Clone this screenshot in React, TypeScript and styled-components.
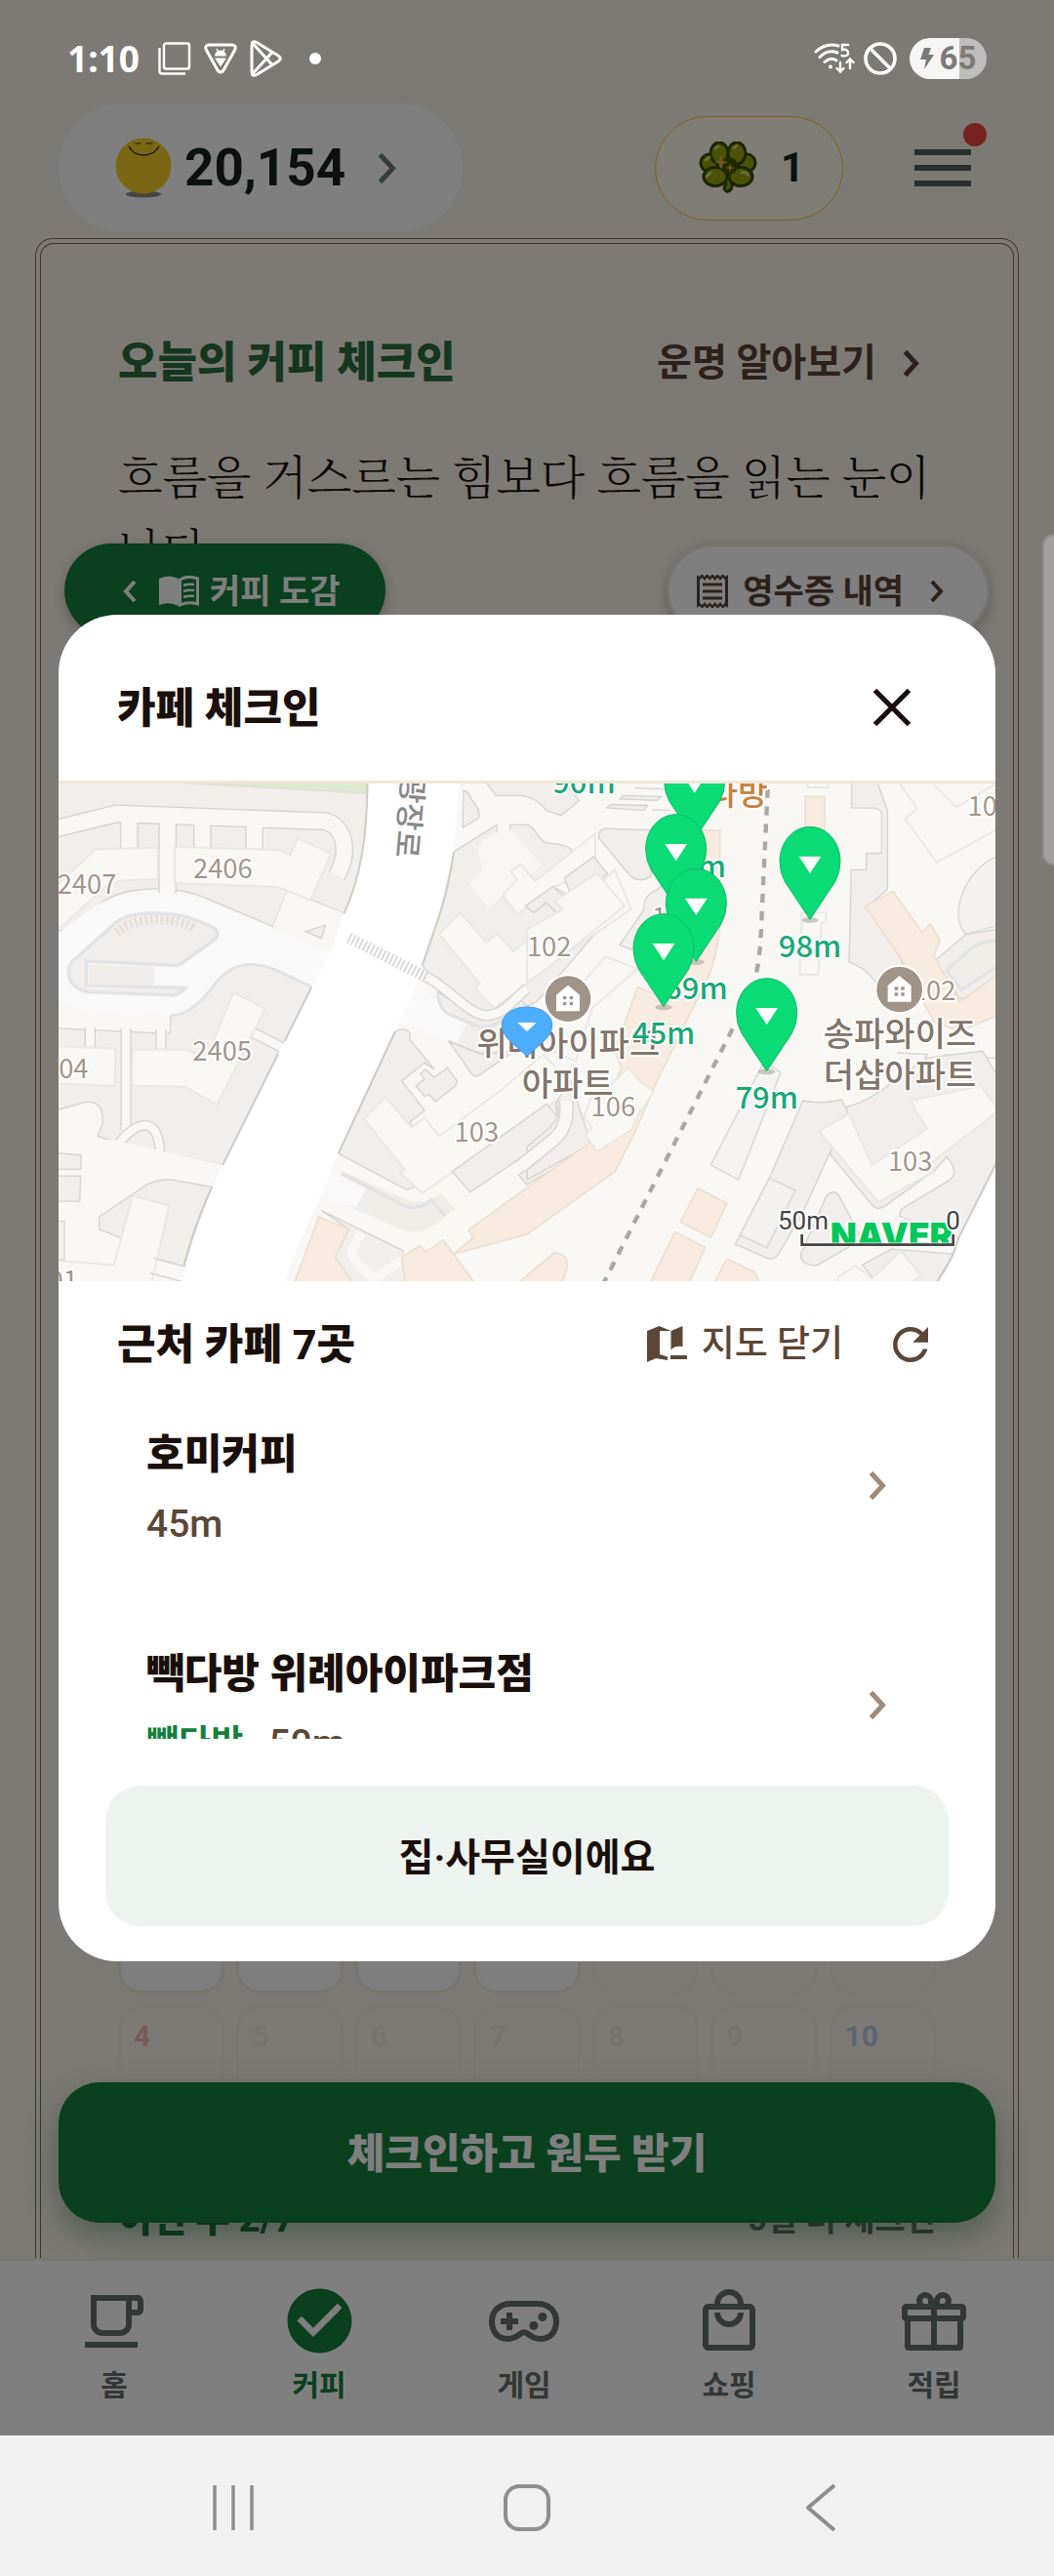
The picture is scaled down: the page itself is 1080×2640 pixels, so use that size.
import React from 'react';
import styled, { createGlobalStyle, css } from 'styled-components';
import {
  MdCheckCircle,
  MdOutlineLocalCafe,
  MdOutlineLocalMall,
  MdRefresh,
} from 'react-icons/md';

const GlobalStyle = createGlobalStyle`
  *, *::before, *::after { box-sizing: border-box; }
  body {
    margin: 0;
    font-family: Roboto, "Noto Sans CJK KR", sans-serif;
    color: #1a0f0a;
  }
  button {
    font: inherit;
    color: inherit;
    border: 0;
    background: none;
    padding: 0;
    cursor: pointer;
  }
  h1, h2, h3, p, ul { margin: 0; padding: 0; font-weight: inherit; }
  ul { list-style: none; }
  svg { display: block; flex: none; }
`;

const green = '#15803d';
const brown = '#5c4636';

const Screen = styled.div`
  position: relative;
  display: flex;
  flex-direction: column;
  height: 100vh;
  overflow: hidden;
  background: #faf5ea;
`;

/* ---------- status bar ---------- */

const StatusBar = styled.div`
  position: relative;
  z-index: 3;
  display: flex;
  align-items: center;
  justify-content: space-between;
  height: 106px;
  padding: 14px 69px 0;
  color: #fff;
`;

const StatusGroup = styled.div<{ $gap: number }>`
  display: flex;
  align-items: center;
  gap: ${p => p.$gap}px;
`;

const Clock = styled.span`
  font: 700 37px/48px "Noto Sans", sans-serif;
  margin-right: 6px;
`;

const StatusDot = styled.span`
  width: 12px;
  height: 12px;
  margin-left: 14px;
  border-radius: 50%;
  background: #fff;
`;

const Battery = styled.span`
  display: flex;
  align-items: center;
  justify-content: center;
  gap: 6px;
  width: 79px;
  height: 42px;
  margin-left: 4px;
  border-radius: 21px;
  background: linear-gradient(90deg, #f5f5f3 65%, #bebdbb 65%);
  color: #7d7a75;
  font: 700 33px/42px Roboto, sans-serif;
`;

/* ---------- header ---------- */

const Header = styled.header`
  display: flex;
  align-items: center;
  height: 132px;
  padding: 0 74px 0 60px;
`;

const PointsPill = styled.button`
  display: flex;
  align-items: center;
  height: 132px;
  padding: 0 68px 0 57px;
  margin-right: auto;
  border-radius: 66px;
  background: #fff;
  color: #14231f;
  font-size: 53px;
  font-weight: 700;
  line-height: 64px;
  span { margin: 0 33px 0 12px; }
`;

const CloverPill = styled.button`
  display: flex;
  align-items: center;
  gap: 24px;
  height: 107px;
  padding: 0 39px 0 44px;
  border: 1px solid #f8bf3a;
  border-radius: 54px;
  background: #fffaeb;
  color: #14231f;
  font-size: 42px;
  font-weight: 700;
  line-height: 54px;
`;

const MenuButton = styled.button`
  position: relative;
  display: grid;
  gap: 10px;
  width: 80px;
  padding: 8px 11px;
  margin-left: 62px;
  i { height: 6px; background: #4e6058; }
`;

const Alert = styled.b`
  position: absolute;
  top: -19px;
  right: -5px;
  width: 24px;
  height: 24px;
  border-radius: 50%;
  background: #ef4444;
`;

/* ---------- page ---------- */

const Page = styled.main`
  position: relative;
  flex: 1;
  min-height: 0;
  display: flex;
  padding: 6px 36px 0;
  overflow: hidden;
`;

const Frame = styled.div`
  flex: 1;
  display: flex;
  padding: 4px 4px 0;
  border: 1px solid #806656;
  border-bottom: 0;
  border-radius: 18px 18px 0 0;
`;

const FrameInner = styled.div`
  flex: 1;
  display: flex;
  flex-direction: column;
  padding: 92px 79px 10px;
  border: 1px solid #806656;
  border-bottom: 0;
  border-radius: 14px 14px 0 0;
`;

const Row = styled.div`
  display: flex;
  align-items: center;
  justify-content: space-between;
`;

const SectionTitle = styled.h2`
  color: #2a6e3e;
  font-size: 44px;
  font-weight: 800;
  line-height: 60px;
`;

const FortuneLink = styled.button`
  display: flex;
  align-items: center;
  gap: 27px;
  padding-right: 17px;
  color: #5c4336;
  font-size: 39px;
  font-weight: 700;
  line-height: 60px;
`;

const Fortune = styled.p`
  margin-top: 46px;
  color: #1c130c;
  font: 300 47px/75px "Noto Serif CJK KR", "Noto Sans CJK KR", serif;
  word-break: keep-all;
`;

const Calendar = styled.div`
  display: grid;
  grid-template-columns: repeat(7, 1fr);
  grid-auto-rows: 144px;
  gap: 12px;
  margin-top: auto;
`;

const Day = styled.div<{ $color?: string; $filled?: boolean }>`
  padding: 14px 13px;
  border: 3px solid ${p => (p.$filled ? '#efeadc' : '#f6f1e6')};
  border-radius: 24px;
  background: ${p => (p.$filled ? '#fefdfd' : 'transparent')};
  color: ${p => p.$color || '#ebe6dd'};
  font-size: 30px;
  font-weight: 700;
  line-height: 30px;
`;

const Progress = styled(Row)`
  margin-top: 45px;
  line-height: 60px;
  font-weight: 700;
`;

const Week = styled.span`
  color: #15703a;
  font-size: 38px;
  font-weight: 800;
`;

const Remaining = styled.span`
  color: #5f6f66;
  font-size: 34px;
`;

const FloatBar = styled.div`
  position: absolute;
  top: 319px;
  left: 66px;
  right: 66px;
  display: flex;
  justify-content: space-between;
  height: 90px;
  border-bottom: 1px solid #e8e2d8;
`;

const FloatPill = styled.button<{ $primary?: boolean }>`
  display: flex;
  align-items: center;
  height: 96px;
  border-radius: 48px;
  font-size: 34px;
  font-weight: 700;
  line-height: 48px;
  box-shadow: 0 4px 14px rgba(40, 30, 20, 0.3);
  ${p =>
    p.$primary
      ? css`
          gap: 11px;
          padding: 2px 46px 0 60px;
          background: ${green};
          color: #fff;
          svg:first-child { margin-right: 12px; }
        `
      : css`
          gap: 15px;
          padding: 2px 44px 0 28px;
          border: 3px solid #f1e5da;
          background: #fff;
          color: #5c4336;
          svg:last-child { margin-left: 12px; }
        `}
`;

const CheckInButton = styled.button`
  position: absolute;
  left: 60px;
  right: 60px;
  bottom: 36px;
  height: 144px;
  padding-top: 4px;
  border-radius: 42px;
  background: ${green};
  color: #fff;
  font-size: 42px;
  font-weight: 800;
  line-height: 60px;
  box-shadow: 0 14px 36px rgba(21, 90, 50, 0.4);
`;

/* ---------- tab bar ---------- */

const TabBar = styled.nav`
  display: grid;
  grid-template-columns: repeat(5, 1fr);
  height: 182px;
  padding: 18px 18px 0 12px;
  border-top: 3px solid #edf0e8;
  background: #fff;
`;

const Tab = styled.button<{ $active?: boolean }>`
  display: flex;
  flex-direction: column;
  align-items: center;
  justify-content: flex-start;
  gap: 2px;
  color: ${p => (p.$active ? green : '#64716a')};
  font-size: 30px;
  font-weight: 700;
  line-height: 42px;
  span { display: grid; place-items: center; height: 87px; }
`;

/* ---------- system navigation ---------- */

const SystemNav = styled.div`
  position: relative;
  z-index: 3;
  display: grid;
  grid-template-columns: repeat(3, 1fr);
  height: 144px;
  padding: 4px 88px 0;
  background: #f1f1f1;
  color: #8e8e8e;
  button { display: grid; place-items: center; }
`;

const EdgeHandle = styled.div`
  position: absolute;
  z-index: 3;
  top: 547px;
  right: 0;
  width: 12px;
  height: 340px;
  border: 2px solid #8f8e8b;
  border-right: 0;
  border-radius: 12px 0 0 12px;
  background: #a1a09e;
`;

/* ---------- dialog ---------- */

const Scrim = styled.div`
  position: absolute;
  z-index: 2;
  inset: 0;
  display: grid;
  align-items: center;
  padding: 0 60px;
  background: rgba(0, 0, 0, 0.5);
`;

const Dialog = styled.section`
  display: flex;
  flex-direction: column;
  border-radius: 60px;
  background: #fff;
  overflow: hidden;
`;

const DialogHeader = styled(Row)`
  height: 173px;
  padding: 19px 73px 0 60px;
  border-bottom: 3px solid #efe6da;
`;

const DialogTitle = styled.h1`
  padding-top: 2px;
  font-size: 43px;
  font-weight: 800;
  line-height: 60px;
`;

const CloseButton = styled.button`
  display: grid;
  place-items: center;
  width: 66px;
  height: 66px;
`;

const MapSvg = styled.svg`
  width: 100%;
  height: 510px;
  text { font-family: "Noto Sans CJK KR", sans-serif; }
`;

const ListHeader = styled(Row)`
  height: 127px;
  padding: 2px 60px 0;
`;

const ListTitle = styled.h2`
  font-size: 43px;
  font-weight: 800;
  line-height: 60px;
`;

const Tools = styled.div`
  display: flex;
  align-items: center;
  gap: 42px;
  color: ${brown};
`;

const MapToggle = styled.button`
  display: flex;
  align-items: center;
  gap: 15px;
  font-size: 37px;
  font-weight: 500;
  line-height: 60px;
`;

const CafeList = styled.ul`
  display: flex;
  flex-direction: column;
  gap: 61px;
  height: 342px;
  overflow: hidden;
`;

const CafeButton = styled.button`
  display: flex;
  align-items: center;
  justify-content: space-between;
  width: 100%;
  padding: 12px 112px 12px 90px;
  text-align: left;
`;

const CafeText = styled.span`
  display: grid;
  gap: 11px;
  padding-top: 9px;
  line-height: 60px;
`;

const CafeName = styled.span`
  font-size: 42px;
  font-weight: 800;
`;

const CafeMeta = styled.span`
  display: flex;
  gap: 26px;
  color: ${brown};
  font-size: 39px;
  font-weight: 500;
`;

const Brand = styled.span`
  color: ${green};
  font-size: 36px;
  font-weight: 700;
`;

const HomeButton = styled.button`
  height: 144px;
  padding-top: 3px;
  margin: 48px 48px 36px;
  border-radius: 36px;
  background: #edf4f0;
  font-size: 39px;
  font-weight: 700;
  line-height: 60px;
`;

/* ---------- icons ---------- */

function Chevron({ height, color = 'currentColor', left = false, weight = 5 }: {
  height: number; color?: string; left?: boolean; weight?: number;
}) {
  const w = height / 2;
  const pad = weight / 2;
  const d = left
    ? `M${w + pad} ${pad}L${pad + 1} ${w + pad}L${w + pad} ${height + pad}`
    : `M${pad} ${pad}L${w + pad - 1} ${w + pad}L${pad} ${height + pad}`;
  return (
    <svg width={w + weight} height={height + weight} fill="none" stroke={color} strokeWidth={weight} aria-hidden>
      <path d={d} />
    </svg>
  );
}

const WindowsIcon = () => (
  <svg width="34" height="34" viewBox="0 0 34 34" fill="none" stroke="#fff" strokeWidth="2.4">
    <rect x="6" y="1.5" width="26" height="26" rx="2" />
    <path d="M1.5 6v24q0 2.500 2.500 2.500h24" />
  </svg>
);

const DebugIcon = () => (
  <svg width="34" height="32" viewBox="0 0 34 32" fill="none">
    <path d="M4.500 2h25q4 1 2.200 5L20 28q-3 4-6 0L2.300 7Q.5 3 4.500 2Z" stroke="#fff" strokeWidth="3" />
    <path d="M11 13.500a6 6 0 0 1 12 0ZM11 15.500h12l-6 9Z" fill="#fff" />
    <path d="M13 6l1.500 3M21 6l-1.500 3" stroke="#fff" strokeWidth="1.400" />
  </svg>
);

const PlayIcon = () => (
  <svg width="34" height="38" viewBox="0 0 34 38" fill="none" stroke="#fff" strokeWidth="3" strokeLinejoin="round">
    <path d="M2 5q0-5 5-2.500L29 16q4.500 3 0 6L7 35.500Q2 38 2 33Z" />
    <path d="M3 3.500L23 25.500M3 34.500L23 12.500" />
  </svg>
);

const WifiIcon = () => (
  <svg width="42" height="32" viewBox="0 0 42 32" fill="none" stroke="#fff" strokeWidth="3" strokeLinecap="round">
    <path d="M2 9Q12-.5 25 3M6 14.500Q14 6 24 10M11 19.500Q17 14 23 18" />
    <circle cx="17" cy="24.500" r="1" fill="#fff" strokeWidth="2" />
    <path d="M27 20v9M23.500 26l3.500 3.500 3.500-3.500M37 26v-9M33.500 20l3.500-3.500 3.500 3.500" strokeWidth="2.400" />
    <path d="M35 2h-6v5q6-1 6 3.200T28.500 13" strokeWidth="2.400" />
  </svg>
);

const BlockIcon = () => (
  <svg width="34" height="34" viewBox="0 0 34 34" fill="none" stroke="#fff" strokeWidth="3.600">
    <circle cx="17" cy="17" r="15" />
    <path d="M6.500 6.500l21 21" />
  </svg>
);

const BoltIcon = () => (
  <svg width="14" height="22" viewBox="0 0 14 22" fill="currentColor">
    <path d="M4 0h7L8.500 7H14L4 22l2-10H0Z" />
  </svg>
);

const CoinIcon = () => (
  <svg width="60" height="64" viewBox="0 0 60 64" fill="none">
    <ellipse cx="30" cy="59" rx="18" ry="3.500" fill="#8c8c8c" />
    <circle cx="30" cy="30" r="28.500" fill="#f4cc28" />
    <path d="M15 10Q20 19 30 19Q41 19 46 10" stroke="#33290a" strokeWidth="1.400" />
    <path d="M21.500 7h6M32.500 7h7" stroke="#33290a" strokeWidth="1.200" />
  </svg>
);

const CloverIcon = () => (
  <svg width="60" height="54" viewBox="0 0 60 54">
    <g fill="#97a50e" stroke="#364a04" strokeWidth="3">
      <path d="M25 34Q30 42 26 48Q29 54 33 49Q36 44 30 34Z" />
      <ellipse cx="11" cy="22" rx="9" ry="9" />
      <ellipse cx="49" cy="22" rx="9" ry="9" />
      <ellipse cx="21" cy="12" rx="9" ry="11" />
      <ellipse cx="39" cy="12" rx="9" ry="11" />
      <ellipse cx="17" cy="36" rx="12" ry="9.500" />
      <ellipse cx="43" cy="36" rx="12" ry="9.500" />
    </g>
    <circle cx="31" cy="25" r="9" fill="#435706" />
    <path d="M7 19l4-3M17 7l3-2M36 7l3-3M8 36l4-4M44 32q5-1 6 2" stroke="#d4dc7a" strokeWidth="2.500" strokeLinecap="round" fill="none" />
    <path d="M23 14l2 6 5 1-5 2-2 6-2-6-5-2 5-1ZM32 22l1 4 4 1-4 1-1 4-1-4-4-1 4-1Z" fill="#e2ab2c" />
  </svg>
);

const BookIcon = () => (
  <svg width="41" height="32" viewBox="0 0 41 32">
    <path d="M0 3Q10-2 20 3V31Q10 26 0 30Z" fill="currentColor" />
    <path d="M21.500 4Q30-1 39.500 3V29Q30 26 21.500 30Z" fill="none" stroke="currentColor" strokeWidth="3" />
    <path d="M25 10q5-2 11-1M25 16q5-2 11-1M25 22q5-2 11-1" fill="none" stroke="currentColor" strokeWidth="2.500" />
  </svg>
);

const ReceiptIcon = () => (
  <svg width="32" height="34" viewBox="0 0 32 34" fill="none" stroke="currentColor" strokeWidth="3">
    <path d="M1.500 2V32M30.500 2V32M6 10h20M6 17h20M6 24h20" />
    <path d="M0 1l2.600 3 2.700-3L8 4l2.600-3 2.700 3L16 1l2.600 3 2.700-3L24 4l2.600-3 2.700 3L32 1M0 33l2.600-3 2.700 3L8 30l2.600 3 2.700-3L16 33l2.600-3 2.700 3L24 30l2.600 3 2.700-3L32 33" strokeWidth="2.500" />
  </svg>
);

const MapIcon = () => (
  <svg width="41" height="37" viewBox="0 0 41 37" fill="currentColor">
    <path d="M0 5L12.500 0L24.500 5L36.500 0V21Q27 20 24.500 25V5L13 5V29L21 31.500V35L9 33L0 37Z" />
    <path d="M24 30h17v4H24Z" />
  </svg>
);

const CloseIcon = () => (
  <svg width="40" height="40" viewBox="0 0 40 40" stroke="currentColor" strokeWidth="5.200">
    <path d="M2.500 2.500l35 35M37.500 2.500l-35 35" />
  </svg>
);

const GamepadIcon = () => (
  <svg width="72" height="72" viewBox="0 0 24 24" fill="none" stroke="currentColor" strokeWidth="2">
    <path d="M7.500 6H16.500C20.500 6 23 8.500 23 12S21 18 17.500 18C15.500 18 14.500 17.200 13.300 16.300Q12 15.200 10.700 16.300C9.500 17.200 8.500 18 6.500 18C3 18 1 15.500 1 12S3.500 6 7.500 6Z" />
    <path d="M7 9v6M4 12h6" />
    <g fill="currentColor" stroke="none">
      <circle cx="18.300" cy="10.500" r="1.500" />
      <circle cx="15.300" cy="13.500" r="1.500" />
    </g>
  </svg>
);

const GiftIcon = () => (
  <svg width="72" height="72" viewBox="0 0 24 24" fill="none" stroke="currentColor" strokeWidth="2">
    <rect x="2" y="7" width="20" height="4" rx=".5" />
    <path d="M3 11v9.500q0 .5.5.5h17q.5 0 .5-.5V11M12 6v15" />
    <path d="M9 7a2 2 0 1 1 2-2v2ZM15 7a2 2 0 1 0-2-2v2Z" />
  </svg>
);

/* ---------- map drawing ---------- */

const Halo = styled.text<{ $fill: string; $weight?: number }>`
  fill: ${p => p.$fill};
  font-weight: ${p => p.$weight || 400};
  stroke: #fff;
  stroke-width: 12px;
  stroke-linejoin: round;
  paint-order: stroke;
`;

const LotLabel = ({ x, y, children }: { x: number; y: number; children: React.ReactNode }) => (
  <Halo x={x} y={y} $fill="#a3958b" fontSize="82" textAnchor="middle">{children}</Halo>
);

const PlaceLabel = ({ x, y, children }: { x: number; y: number; children: React.ReactNode }) => (
  <Halo x={x} y={y} $fill="#84756a" $weight={500} fontSize="102" textAnchor="middle">{children}</Halo>
);

const CafePin = ({ x, y, label }: { x: number; y: number; label: string }) => (
  <g transform={`translate(${x} ${y})`}>
    <ellipse cx="0" cy="2" rx="26" ry="9" fill="#000" opacity=".18" />
    <Halo x={0} y={116} $fill="#1aa877" $weight={500} fontSize="93" textAnchor="middle">{label}</Halo>
    <path d="M0 0L-76-114Q-93-144-93-178C-93-240-50-285 0-285C50-285 93-240 93-178Q93-144 76-114Z" fill="#0adb75" stroke="#0dbb68" strokeWidth="3" />
    <path d="M-34-194H34L0-142Z" fill="#fff" />
  </g>
);

const HousePin = ({ x, y }: { x: number; y: number }) => (
  <g transform={`translate(${x} ${y})`}>
    <circle r="76" fill="#fff" />
    <circle r="70" fill="#a09388" />
    <path d="M-36-12L0-42L36-12V38H-36Z" fill="#fff" />
    <path d="M-15-8h10v10h-10ZM5-8h10v10h-10ZM-15 10h10v10h-10ZM5 10h10v10h-10Z" fill="#a09388" />
  </g>
);

const lot = { fill: '#f1eeeb', stroke: '#d6d4d0', strokeWidth: 4 };
const building = { fill: '#f8f7f3', stroke: '#eae8e4', strokeWidth: 6 };
const shop = { fill: '#f8ece0', stroke: '#ebdfd3', strokeWidth: 5 };

function NeighborhoodMap() {
  const lanes = 'M10 178L208 130L850 153C905 165 930 240 885 318M247 130V240M365 130V372M472 140V236M632 146V240';
  const drives = 'M127 770V850M237 770V1090M345 770V850M630 795L740 850';
  const loop = 'M200 1150C270 1050 345 1040 342 1180';
  return (
    <MapSvg viewBox="30 39 2880 1530" preserveAspectRatio="xMidYMid slice" role="img" aria-label="근처 카페 지도">
      <rect x="-600" y="0" width="4200" height="1700" fill="#f8f7f3" />

      <g transform="scale(1 1.014)">
        {/* west blocks */}
        <path {...lot} d="M20 30H980C978 200 960 320 908 432L808 392L732 365L690 472L480 385C400 350 230 340 150 410L48 500L20 470Z" />
        <path d="M310 30H985V68Z" fill="#dcebcd" stroke="#e4ded8" strokeWidth="6" />
        <path d={lanes} fill="none" stroke="#d6d4d0" strokeWidth="56" strokeLinejoin="round" />
        <path d="M732 365L908 432L850 580L690 472Z" fill="#f8f7f3" />
        <path d={lanes} fill="none" stroke="#f8f7f3" strokeWidth="48" strokeLinejoin="round" />
        <path {...building} d="M20 480V350L145 238L335 232V328L225 333L180 345L45 468Z" />
        <path {...building} d="M387 230L710 240L742 255L765 205L868 250L805 392L703 352L387 340Z" />
        <path {...lot} d="M790 487L850 468L838 508Z" />
        <path {...lot} d="M20 780L372 797L375 742C430 740 470 700 520 635C560 590 620 570 700 605L808 655L535 1195L220 1130L150 1108L165 1070C170 1010 140 1000 110 1005L20 1030Z" />
        <path d="M20 700V500L150 405C250 360 400 360 480 395L890 560L820 662L700 605C620 570 560 590 520 635C470 700 430 740 375 742C200 735 60 730 20 690Z" fill="#f9f9fa" />
        <path d="M375 742C430 740 470 700 520 635C560 590 620 570 700 605L808 655" fill="none" stroke="#e2e3e4" strokeWidth="9" />
        <path d="M70 580L200 465C240 425 340 430 400 437C440 445 470 460 500 472C525 485 525 500 505 515L420 575Q405 590 385 590L115 577V650L420 658Q400 684 370 680L120 670C60 660 50 610 70 580Z" fill="#f1eeeb" stroke="#e2e3e4" strokeWidth="10" />
        <path d="M121 586L400 598L470 600L420 652L121 644Z" fill="#f9f9fa" />
        <path d="M121 586L323 595V651L121 644Z" fill="#f1ede8" />
        <path d="M208 490C260 440 400 440 450 480" fill="none" stroke="#e6dfda" strokeWidth="28" strokeDasharray="8 8" />
        <path d={drives} fill="none" stroke="#d6d4d0" strokeWidth="34" />
        <path d={drives} fill="none" stroke="#f8f7f3" strokeWidth="26" />
        <path d="M20 742H372V785L20 776Z" fill="#f8f7f3" />
        <path {...building} d="M258 845H420L485 870L568 672L665 720L517 1012L418 958L255 955Z" />
        <path {...building} d="M20 835L205 842L202 955L20 948Z" />
        <path d={loop} fill="none" stroke="#d6d4d0" strokeWidth="32" />
        <path d={loop} fill="none" stroke="#f8f7f3" strokeWidth="24" />
        <path d="M20 1110L200 1120L540 1195L500 1262L20 1255Z" fill="#f8f7f3" />
        <path {...lot} d="M20 1158L100 1165L98 1208H20ZM20 1228H98L95 1305H20ZM20 1365H48V1483H20Z" />
        <path {...lot} d="M155 1352L290 1262C320 1240 350 1238 380 1240L502 1262C470 1340 440 1410 415 1502L325 1478L220 1415L155 1390Z" />
        <path {...building} d="M258 1288L370 1318L310 1580H20V1485L200 1498Z" />
        <path d="M325 1478L415 1502M312 1523L407 1548" stroke="#d6d4d0" strokeWidth="4" />

        {/* east side of the boulevard */}
        <path {...lot} d="M1275 60Q1290 60 1298 85Q1335 130 1318 145L1272 172Z" />
        <path {...lot} d="M1245 245L1378 163V200H1418V163H1470C1505 175 1500 220 1545 220C1590 225 1625 235 1600 260L1495 335L1450 283L1420 305L1440 330L1393 378L1440 435L1552 352L1640 400L1700 470L1500 700L1400 740L1300 730L1200 650L1148 590L1200 440Z" />
        <path d="M1320 250Q1320 190 1420 180L1515 285L1350 415L1292 345L1335 300Z" fill="#f7f6f5" />
        <path {...building} d="M1395 378L1440 330L1420 305L1450 283L1495 335L1680 190V300L1552 352L1440 435Z" />
        <path {...building} d="M1200 495L1265 430L1345 520L1380 495L1428 548L1620 400L1740 300L1790 420L1625 530L1370 720L1310 660L1325 645Z" />
        <path {...lot} d="M1195 670L1330 750L1450 695L1480 720L1330 860L1230 820Z" />
        <path d="M1160 625C1220 650 1290 740 1345 742C1400 740 1420 700 1470 660" fill="none" stroke="#d6d4d0" strokeWidth="34" />
        <path d="M1160 625C1220 650 1290 740 1345 742C1400 740 1420 700 1470 660" fill="none" stroke="#f8f7f3" strokeWidth="26" />
        <path d="M1130 650L1285 768L1250 830L1070 760Z" fill="#f9f9fa" />
        <path d="M1195 680Q1205 730 1240 742L1320 775Q1370 780 1400 750M1230 820L1290 850Q1340 865 1400 850" fill="none" stroke="#e2e3e4" strokeWidth="10" />
        <path {...lot} d="M1230 820L1330 860L1430 850L1320 925Q1305 930 1290 905Z" />
        <path {...lot} d="M1065 790Q1095 775 1110 795V815L1185 905L1155 885L1085 940L1155 1030L1110 1065L1200 1200L1430 1050L1560 960V1090L1100 1270L890 1160Z" />
        <path {...lot} d="M1128 955L1155 935L1143 918L1158 905L1185 930L1225 900L1255 940L1250 955L1188 1003L1168 980L1155 987Z" />
        <path {...building} d="M968 1055L1035 990L1115 1080L1155 1052L1200 1108L1400 960L1520 860L1620 960L1470 1060L1148 1280L1080 1220L1095 1210Z" />
        <path {...lot} d="M1240 1215L1530 1010L1590 1080L1295 1278Z" />
        <path d="M905 1215L1100 1300Q1150 1320 1205 1280L1250 1330L1215 1350Q1180 1400 1100 1397L850 1290Z" fill="#f0ece8" />
        <path d="M900 1220L1095 1320Q1140 1335 1175 1300L1220 1350" fill="none" stroke="#e2e3e4" strokeWidth="10" />
        <path d="M840 1200L975 1268L945 1325L820 1290Z" fill="#f9f9fa" />
        <path {...lot} d="M838 1333L1090 1455L1085 1478L1130 1530L1090 1580H940L880 1475L922 1390Z" />
        <path d="M960 1400L930 1460Q930 1480 1000 1540L1100 1475" fill="none" stroke="#f8f7f3" strokeWidth="28" />
        <path {...shop} d="M830 1352L922 1390L880 1475L930 1545L940 1580H745Z" />
        <path {...shop} d="M1085 1475L1140 1440L1160 1460L1212 1422L1330 1580H1100Z" />
        <path {...lot} d="M1445 1225L1560 1150L1640 1120L1600 1180L1468 1255Z" />

        <g transform="translate(1470 0)">
          <path {...lot} d="M-130 30L-95 75H-20Q30 80 60 120L105 135L160 90L110 30Z" />
          <path {...lot} d="M240 175L400 180L380 320Q340 345 310 310L222 205Q215 180 240 175Z" />
          <path {...lot} d="M115 325L205 260L247 312L130 400L80 350L-5 410L20 430L60 400L95 435L140 390Z" />
          <path {...building} d="M85 395L215 310L300 410L60 600L0 640V480L110 420Z" />
          <path d="M245 112L360 120L370 105L258 102ZM285 85L400 90L412 78L295 75ZM330 52L430 55M385 118L440 120" {...lot} />
          <path {...lot} d="M360 420Q355 380 400 360L480 300V440L340 550L285 528Z" />
          <path {...building} d="M240 563L340 600L200 720L150 880L80 850L70 760Z" />
          <path {...lot} d="M90 1010Q110 1050 60 1090L0 1140V1240L200 1130L180 1080L130 930Z" />
          <path d="M120 1000Q130 1080 80 1120L-20 1200" fill="none" stroke="#d6d4d0" strokeWidth="44" />
          <path d="M120 1000Q130 1080 80 1120L-20 1200" fill="none" stroke="#f8f7f3" strokeWidth="36" />
          <path {...shop} d="M530 180H593V450C590 520 575 590 550 640L400 940L330 1100L270 1215L0 1405L-225 1465L-165 1415L-180 1392L190 1130L290 900L270 850L340 655L420 690L500 500Z" />
          <path {...building} d="M175 1050L210 960L240 970L310 900L345 940L390 972L350 1030L320 1090L215 1155L180 1105L200 1080Z" />
          <path {...shop} d="M-60 1580L85 1460Q130 1465 122 1510L100 1580Z" />
          <path d="M740 55L722 430Q718 560 705 612M632 782L232 1560" fill="none" stroke="#a8a8a8" strokeWidth="13" strokeDasharray="27 26" />
          <path {...shop} d="M855 78H915V300H855Z" />
          <path {...building} d="M862 30V50H926V30ZM845 430H920V460H905L895 618H838Z" />
          <path {...lot} d="M998 30H1075L1108 120V360L1045 410L1145 560L1180 650H1080C1060 620 1025 590 990 580L997 300H1043V250H1090V130Q1088 115 1065 113L998 112Z" />
          <path {...building} d="M1240 30L1320 110L1440 40V180L1260 278L1162 145L1200 115L1140 30Z" />
          <path d="M1450 258C1350 290 1290 440 1350 495L1450 468Z" fill="#f3f2f1" stroke="#d9d7d4" strokeWidth="4" />
          <path {...lot} d="M1255 575L1350 495L1450 480V700L1330 690Z" />
          <path {...shop} d="M1040 410L1125 365L1215 490L1240 465L1270 515L1250 560L1330 700L1450 615V740L1330 790L1250 760L1150 570Z" />
          <path d="M1290 605L1370 535Q1400 515 1450 515V590L1335 665Z" fill="#f1ede8" stroke="#e2e3e4" strokeWidth="10" />
          <path d="M1138 855L1230 860L1220 880M1280 860L1450 872" fill="none" stroke="#d6d4d0" strokeWidth="4" />
          <path d="M730 880L780 915L650 1240L565 1195Z" fill="#f4f3f2" stroke="#dddbd9" strokeWidth="5" />
          <path {...lot} d="M848 1000Q905 1012 967 997L1000 1060L930 1160L845 1345L770 1470Q755 1485 740 1478L640 1435L745 1235Z" />
          <path d="M745 1235L825 1272L738 1445L655 1408Z" fill="#f3f2f1" stroke="#dddbd9" strokeWidth="5" />
          <path {...lot} d="M980 1020Q1060 1000 1140 930L1230 870L1400 850L1450 930V1220L1330 1420L1145 1350L1150 1330L1300 1240Q1330 1215 1290 1170L1255 1210L1100 1320Q1075 1335 1060 1315L930 1160L995 1060Z" />
          <path {...building} d="M897 1092L990 1040L1060 1195L1230 1085L1195 1030L1180 1000L1395 955L1450 1030L1240 1190L1250 1215L1080 1308Z" />
          <path {...lot} d="M920 1290Q945 1265 960 1290L1030 1420L890 1500Q840 1500 842 1465Z" />
          <path {...lot} d="M1030 1498L1120 1450L1310 1465L1240 1580H1100Z" />
          <path {...building} d="M955 1535L1010 1500L1060 1540L1150 1455L1210 1530L1140 1580H960Z" />
          <path {...shop} d="M525 1265L615 1312L565 1415L472 1368ZM455 1398L548 1445L495 1560H375ZM615 1480L700 1520L730 1580H560Z" />
          <path d="M1450 1175L1330 1410L1310 1465Q1290 1510 1240 1580H1450Z" fill="#fff" stroke="#d0ccc3" strokeWidth="6" />
        </g>

        {/* boulevard */}
        <path d="M980 30C978 200 960 320 908 432L870 540L808 655L535 1195C480 1310 440 1410 405 1580H715C745 1480 790 1390 835 1290L890 1160L1065 790L1125 660L1148 590L1200 440L1245 245L1263 30Z" fill="#fff" />
        <path d="M980 30C978 200 960 320 908 432M808 655L725 820M705 858L535 1195M502 1262Q450 1370 415 1502M1245 245Q1230 350 1200 440L1148 590M1065 790L890 1160" fill="none" stroke="#d0ccc3" strokeWidth="6" />
        <path d="M922 506L1166 628" fill="none" stroke="#dadada" strokeWidth="34" strokeDasharray="6 7" />
      </g>

      <text x="1088" y="12" transform="rotate(95 1088 12)" fontSize="92" fontWeight="500" fill="#888">광장로</text>

      <LotLabel x={117} y={378}>2407</LotLabel>
      <LotLabel x={535} y={330}>2406</LotLabel>
      <LotLabel x={533} y={892}>2405</LotLabel>
      <LotLabel x={76} y={945}>04</LotLabel>
      <LotLabel x={44} y={1597}>01</LotLabel>
      <LotLabel x={1315} y={1141}>103</LotLabel>
      <LotLabel x={1538} y={569}>102</LotLabel>
      <LotLabel x={1735} y={1063}>106</LotLabel>
      <LotLabel x={1922} y={480}>101</LotLabel>
      <LotLabel x={2648} y={1229}>103</LotLabel>
      <LotLabel x={2720} y={704}>102</LotLabel>
      <LotLabel x={2893} y={137}>101</LotLabel>

      <HousePin x={1596} y={701} />
      <HousePin x={2615} y={672} />
      <PlaceLabel x={1597} y={876}>위례아이파크</PlaceLabel>
      <PlaceLabel x={1595} y={1000}>아파트</PlaceLabel>
      <PlaceLabel x={2616} y={847}>송파와이즈</PlaceLabel>
      <PlaceLabel x={2616} y={971}>더샵아파트</PlaceLabel>
      <Halo x={2072} y={104} $fill="#c9803c" $weight={500} fontSize="100" textAnchor="middle">빽다방</Halo>

      <CafePin x={1645} y={-46} label="90m" />
      <CafePin x={1985} y={210} label="50m" />
      <CafePin x={1928} y={419} label="59m" />
      <CafePin x={1990} y={586} label="69m" />
      <CafePin x={1890} y={725} label="45m" />
      <CafePin x={2340} y={457} label="98m" />
      <CafePin x={2207} y={923} label="79m" />

      <g transform="translate(1470 877)">
        <path d="M0 0L-50-44Q-77-70-77-94C-77-127-45-151 0-151C45-151 77-127 77-94Q77-70 50-44Z" fill="#4dadff" stroke="#3d97f2" strokeWidth="3" />
        <path d="M-29-103H29L0-76Z" fill="#fff" />
      </g>

      {/* scale bar and provider mark */}
      <clipPath id="mark"><rect x="2380" y="1340" width="420" height="114" /></clipPath>
      <g clipPath="url(#mark)">
        <Halo x={2402} y={1466} $fill="#03c75a" $weight={900} fontSize="106" style={{ fontFamily: 'Inter, sans-serif' }}>NAVER</Halo>
      </g>
      <path d="M2315 1425V1457H2780V1425" fill="none" stroke="#fff" strokeWidth="16" opacity=".5" />
      <path d="M2315 1425V1457H2780V1425" fill="none" stroke="#444" strokeWidth="8" />
      <Halo x={2319} y={1411} $fill="#444" fontSize="78" textAnchor="middle" style={{ fontFamily: 'Roboto, sans-serif' }}>50m</Halo>
      <Halo x={2780} y={1411} $fill="#444" fontSize="78" textAnchor="middle" style={{ fontFamily: 'Roboto, sans-serif' }}>0</Halo>
    </MapSvg>
  );
}

/* ---------- app ---------- */

const week = [
  { day: 4, color: '#f6b4ae' },
  { day: 5 }, { day: 6 }, { day: 7 }, { day: 8 }, { day: 9 },
  { day: 10, color: '#b8c8ea' },
];

const cafes = [
  { name: '호미커피', distance: '45m' },
  { name: '빽다방 위례아이파크점', brand: '빽다방', distance: '50m' },
];

const tabs = [
  { label: '홈', icon: <MdOutlineLocalCafe size={72} /> },
  { label: '커피', icon: <MdCheckCircle size={79} />, active: true },
  { label: '게임', icon: <GamepadIcon /> },
  { label: '쇼핑', icon: <MdOutlineLocalMall size={72} /> },
  { label: '적립', icon: <GiftIcon /> },
];

export default function App() {
  return (
    <>
      <GlobalStyle />
      <Screen>
        <StatusBar>
          <StatusGroup $gap={13}>
            <Clock>1:10</Clock>
            <WindowsIcon />
            <DebugIcon />
            <PlayIcon />
            <StatusDot />
          </StatusGroup>
          <StatusGroup $gap={9}>
            <WifiIcon />
            <BlockIcon />
            <Battery><BoltIcon />65</Battery>
          </StatusGroup>
        </StatusBar>

        <Header>
          <PointsPill>
            <CoinIcon />
            <span>20,154</span>
            <Chevron height={28} color="#6b7f77" />
          </PointsPill>
          <CloverPill><CloverIcon />1</CloverPill>
          <MenuButton aria-label="메뉴"><i /><i /><i /><Alert /></MenuButton>
        </Header>

        <Page>
          <Frame>
            <FrameInner>
              <Row>
                <SectionTitle>오늘의 커피 체크인</SectionTitle>
                <FortuneLink>운명 알아보기<Chevron height={24} /></FortuneLink>
              </Row>
              <Fortune>흐름을 거스르는 힘보다 흐름을 읽는 눈이 낫다.</Fortune>
              <Calendar>
                {week.map((d, i) => <Day key={`p${d.day}`} $filled={i < 4} />)}
                {week.map(d => <Day key={d.day} $color={d.color}>{d.day}</Day>)}
              </Calendar>
              <Progress>
                <Week>이번 주 2/7</Week>
                <Remaining>5일 더 체크인</Remaining>
              </Progress>
            </FrameInner>
          </Frame>
          <FloatBar>
            <FloatPill $primary><Chevron height={20} left weight={4} /><BookIcon />커피 도감</FloatPill>
            <FloatPill><ReceiptIcon />영수증 내역<Chevron height={20} weight={4} /></FloatPill>
          </FloatBar>
          <CheckInButton>체크인하고 원두 받기</CheckInButton>
        </Page>

        <TabBar>
          {tabs.map(t => (
            <Tab key={t.label} $active={t.active}><span>{t.icon}</span>{t.label}</Tab>
          ))}
        </TabBar>

        <Scrim>
          <Dialog role="dialog" aria-label="카페 체크인">
            <DialogHeader>
              <DialogTitle>카페 체크인</DialogTitle>
              <CloseButton aria-label="닫기"><CloseIcon /></CloseButton>
            </DialogHeader>
            <NeighborhoodMap />
            <ListHeader>
              <ListTitle>근처 카페 7곳</ListTitle>
              <Tools>
                <MapToggle><MapIcon />지도 닫기</MapToggle>
                <button aria-label="새로고침"><MdRefresh size={54} /></button>
              </Tools>
            </ListHeader>
            <CafeList>
              {cafes.map(c => (
                <li key={c.name}>
                  <CafeButton>
                    <CafeText>
                      <CafeName>{c.name}</CafeName>
                      <CafeMeta>{c.brand && <Brand>{c.brand}</Brand>}{c.distance}</CafeMeta>
                    </CafeText>
                    <Chevron height={26} color="#a08b77" />
                  </CafeButton>
                </li>
              ))}
            </CafeList>
            <HomeButton>집·사무실이에요</HomeButton>
          </Dialog>
        </Scrim>

        <EdgeHandle />
        <SystemNav>
          <button aria-label="최근 앱">
            <svg width="44" height="48" stroke="currentColor" strokeWidth="3.500"><path d="M3 1v46M22 1v46M41 1v46" /></svg>
          </button>
          <button aria-label="홈 화면">
            <svg width="50" height="50" fill="none" stroke="currentColor" strokeWidth="4"><rect x="3" y="3" width="44" height="44" rx="14" /></svg>
          </button>
          <button aria-label="뒤로">
            <svg width="34" height="50" fill="none" stroke="currentColor" strokeWidth="4" strokeLinejoin="round"><path d="M31 2L4 25L31 48" /></svg>
          </button>
        </SystemNav>
      </Screen>
    </>
  );
}
